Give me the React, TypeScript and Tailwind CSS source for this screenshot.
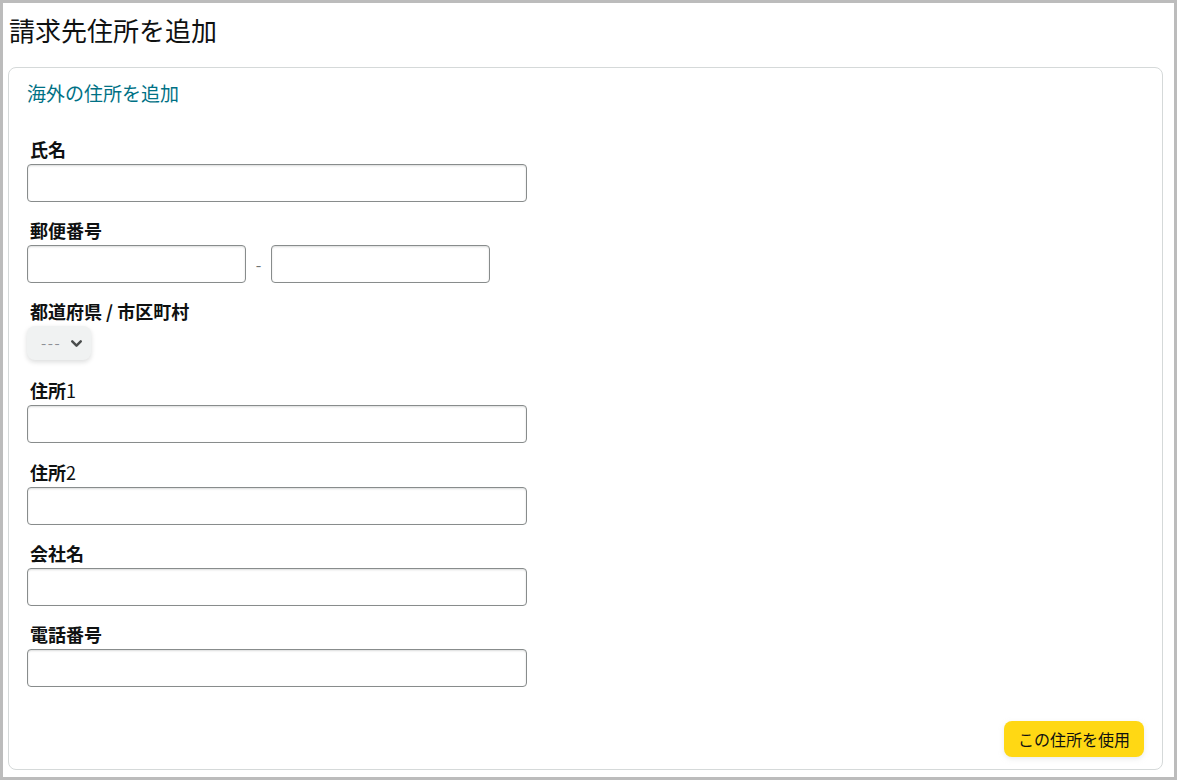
import { ChevronDown } from 'lucide-react';

const font = { fontFamily: '"Noto Sans CJK JP", "Noto Sans", sans-serif' };

function Label({ children }: { children: React.ReactNode }) {
  return <div className="text-[18px] font-bold leading-[24px] pl-[3px] mb-[3px] text-[#0f1111]">{children}</div>;
}

function Field({ label, mb = 'mb-[16px]' }: { label: React.ReactNode; mb?: string }) {
  return (
    <div className={mb}>
      <Label>{label}</Label>
      <input className="w-[500px] h-[38px] rounded-[4px] border border-[#888c8c] shadow-[inset_0_1px_2px_rgba(15,17,17,0.15)] bg-white" />
    </div>
  );
}

export default function App() {
  return (
    <div style={font} className="w-[1177px] h-[780px] border-[3px] border-[#bcbcbc] bg-white flex flex-col text-[#0f1111]">
      {/* Title */}
      <h1 className="text-[26px] leading-[32px] pl-[6px] pt-[11px] pb-[21px] text-[#0f1111]">請求先住所を追加</h1>

      {/* Card */}
      <div className="flex-1 ml-[5px] mr-[11px] mb-[7px] border border-[#d5d9d9] rounded-[8px] px-[18px] pt-[12px] flex flex-col">
        <a className="text-[19px] leading-[26px] text-[#007185] mb-[31px] self-start">海外の住所を追加</a>

        <Field label="氏名" />

        <div className="mb-[16px]">
          <Label>郵便番号</Label>
          <div className="flex items-center">
            <input className="w-[219px] h-[38px] rounded-[4px] border border-[#888c8c] shadow-[inset_0_1px_2px_rgba(15,17,17,0.15)]" />
            <span className="w-[25px] text-center text-[#6f7373] text-[16px]">-</span>
            <input className="w-[219px] h-[38px] rounded-[4px] border border-[#888c8c] shadow-[inset_0_1px_2px_rgba(15,17,17,0.15)]" />
          </div>
        </div>

        <div className="mb-[18px]">
          <Label>
            都道府県 / 市区町村
          </Label>
          <div className="mt-[1px] w-[64px] h-[34px] rounded-[8px] bg-[#f0f2f2] shadow-[0_2px_5px_rgba(15,17,17,0.15)] flex items-center pl-[14px] gap-[7px]">
            <span className="text-[15px] text-[#8d9096] tracking-[1.5px]">---</span>
            <ChevronDown size={17} strokeWidth={3.5} className="text-[#4a4d4d]" />
          </div>
        </div>

        <Field label={<>住所<span className="font-normal">1</span></>} mb="mb-[17px]" />
        <Field label={<>住所<span className="font-normal">2</span></>} />
        <Field label="会社名" />
        <Field label="電話番号" />

        <div className="flex-1" />
        <div className="flex justify-end pb-[12px]">
          <button className="h-[36px] px-[14px] rounded-[8px] bg-[#ffd814] text-[16px] text-[#0f1111] shadow-[0_2px_5px_rgba(213,217,217,0.5)]">
            この住所を使用
          </button>
        </div>
      </div>
    </div>
  );
}
